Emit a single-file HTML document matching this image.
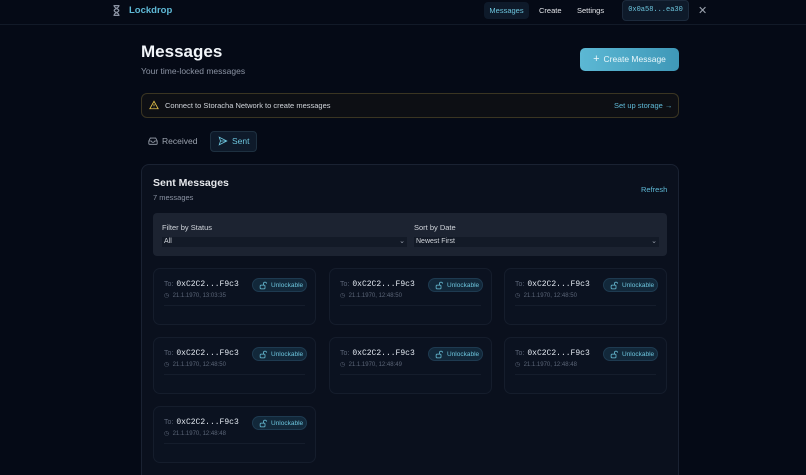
<!DOCTYPE html>
<html><head><meta charset="utf-8"><style>
*{box-sizing:border-box;margin:0;padding:0}
html,body{width:806px;height:475px;overflow:hidden}
body{background:#050a16;font-family:"Liberation Sans",sans-serif;position:relative;color:#e5e7eb}
.a{position:absolute}
.mono{font-family:"Liberation Mono",monospace}
.card{position:absolute;width:163px;height:57px;border:1px solid #151d2c;border-radius:7px;background:#0b1220}
.card .to{position:absolute;left:10px;top:11px;font-size:7px;color:#5b6577}
.card .to b{font-family:"Liberation Mono",monospace;font-weight:normal;font-size:8px;color:#e2e8f0;margin-left:3px}
.card .dt{position:absolute;left:10px;top:23px;font-size:6px;color:#5b6577}
.card .line{position:absolute;left:10px;right:10px;top:36px;border-top:1px solid #151d2c}
.badge{position:absolute;left:98px;top:9px;width:55px;height:14px;border-radius:7px;background:#12283a;border:1px solid #1e3a50;color:#6cc4dc;font-size:6.5px;line-height:12px;padding-left:18px;padding-top:0}
.badge span{position:absolute;top:3px;left:18px;line-height:7px}
.badge svg{position:absolute;left:6px;top:2px}
</style></head><body>
<div class="a" style="left:0;top:24px;width:806px;border-top:1px solid #121a28"></div>
<svg class="a" style="left:113px;top:5px" width="7" height="11" viewBox="0 0 7 11" fill="none" stroke="#8b93a3" stroke-width="1.2"><path d="M0.5 0.6h6M0.5 10.4h6M1.2 0.6c0 3 4.6 3 4.6 4.9S1.2 7.4 1.2 10.4M5.8 0.6c0 3-4.6 3-4.6 4.9s4.6 1.9 4.6 4.9"/></svg>
<div class="a" style="left:129px;top:5px;color:#5fb9d6;font-size:9.5px;font-weight:bold">Lockdrop</div>
<div class="a" style="left:484px;top:2px;width:45px;height:17px;background:#0e1a2a;border-radius:4px;color:#6cc4dc;font-size:7.5px;line-height:17px;text-align:center">Messages</div>
<div class="a" style="left:539px;top:6px;color:#e5e7eb;font-size:7.5px">Create</div>
<div class="a" style="left:577px;top:6px;color:#e5e7eb;font-size:7.5px">Settings</div>
<div class="a mono" style="left:622px;top:0;width:67px;height:21px;background:#0e1a2a;border:1px solid #1c2a3c;border-radius:4px;color:#6cc4dc;font-size:7px;line-height:19px;text-align:center">0x0a58...ea30</div>
<div class="a" style="left:698px;top:4px;color:#9ca3af;font-size:11px">✕</div>

<div class="a" style="left:141px;top:42px;font-size:17px;font-weight:bold;color:#f1f5f9">Messages</div>
<div class="a" style="left:141px;top:66px;font-size:8.5px;color:#8b93a3">Your time-locked messages</div>
<div class="a" style="left:580px;top:48px;width:99px;height:23px;border-radius:5px;background:linear-gradient(90deg,#5cb8d4,#3f98b8);color:#eaf7fb;font-size:8.5px;line-height:23px;text-align:center"><span style="font-size:11px;margin-right:4px">+</span>Create Message</div>

<div class="a" style="left:141px;top:93px;width:538px;height:25px;border:1px solid #3a3522;border-radius:6px;background:#0d0f14"></div>
<svg class="a" style="left:149px;top:100px" width="10" height="10" viewBox="0 0 24 24" fill="none" stroke="#e2c04a" stroke-width="2"><path d="M12 3L2 21h20z M12 10v5 M12 18v.5"/></svg>
<div class="a" style="left:165px;top:101px;font-size:7.5px;color:#d1d5db">Connect to Storacha Network to create messages</div>
<div class="a" style="left:614px;top:101px;font-size:7.5px;color:#5fb9d6">Set up storage →</div>

<svg class="a" style="left:148px;top:136px" width="10" height="10" viewBox="0 0 24 24" fill="none" stroke="#9ca3af" stroke-width="2"><path d="M22 12h-6l-2 3h-4l-2-3H2"/><path d="M5.5 5h13L22 12v6a2 2 0 0 1-2 2H4a2 2 0 0 1-2-2v-6z"/></svg>
<div class="a" style="left:162px;top:136px;font-size:8.5px;color:#9ca3af">Received</div>
<div class="a" style="left:210px;top:131px;width:47px;height:21px;border:1px solid #1e3040;background:#0e1a2a;border-radius:4px"></div>
<svg class="a" style="left:218px;top:136px" width="10" height="10" viewBox="0 0 24 24" fill="none" stroke="#6cc4dc" stroke-width="2"><path d="M3 3l18 9-18 9 3-9z M6 12h15"/></svg>
<div class="a" style="left:232px;top:136px;font-size:8.5px;color:#6cc4dc">Sent</div>

<div class="a" style="left:141px;top:164px;width:538px;height:311px;border:1px solid #1a2232;border-bottom:none;border-radius:8px 8px 0 0;background:#0a101d"></div>
<div class="a" style="left:153px;top:177px;font-size:10.5px;font-weight:bold;color:#e5e7eb">Sent Messages</div>
<div class="a" style="left:153px;top:193px;font-size:7.5px;color:#8b93a3">7 messages</div>
<div class="a" style="left:641px;top:185px;font-size:7.5px;color:#5fb9d6">Refresh</div>

<div class="a" style="left:153px;top:213px;width:514px;height:43px;border-radius:4px;background:#1c2331"></div>
<div class="a" style="left:162px;top:223px;font-size:7.5px;color:#d1d5db">Filter by Status</div>
<div class="a" style="left:162px;top:237px;width:245px;height:10px;background:#131a27;font-size:7px;color:#d1d5db;padding-left:2px;line-height:10px">All<span style="position:absolute;right:2px;color:#9ca3af">⌄</span></div>
<div class="a" style="left:414px;top:223px;font-size:7.5px;color:#d1d5db">Sort by Date</div>
<div class="a" style="left:414px;top:237px;width:245px;height:10px;background:#131a27;font-size:7px;color:#d1d5db;padding-left:2px;line-height:10px">Newest First<span style="position:absolute;right:2px;color:#9ca3af">⌄</span></div>

<div class="card" style="left:153px;top:268px"><div class="to">To:<b>0xC2C2...F9c3</b></div><div class="dt">◷ &nbsp;21.1.1970, 13:03:35</div><div class="line"></div><div class="badge"><svg width="9" height="9" viewBox="0 0 24 24" fill="none" stroke="#6cc4dc" stroke-width="2"><rect x="3" y="11" width="13" height="10" rx="2"/><path d="M12 11V7a4 4 0 0 1 8 0"/></svg><span>Unlockable</span></div></div>
<div class="card" style="left:329px;top:268px"><div class="to">To:<b>0xC2C2...F9c3</b></div><div class="dt">◷ &nbsp;21.1.1970, 12:48:50</div><div class="line"></div><div class="badge"><svg width="9" height="9" viewBox="0 0 24 24" fill="none" stroke="#6cc4dc" stroke-width="2"><rect x="3" y="11" width="13" height="10" rx="2"/><path d="M12 11V7a4 4 0 0 1 8 0"/></svg><span>Unlockable</span></div></div>
<div class="card" style="left:504px;top:268px"><div class="to">To:<b>0xC2C2...F9c3</b></div><div class="dt">◷ &nbsp;21.1.1970, 12:48:50</div><div class="line"></div><div class="badge"><svg width="9" height="9" viewBox="0 0 24 24" fill="none" stroke="#6cc4dc" stroke-width="2"><rect x="3" y="11" width="13" height="10" rx="2"/><path d="M12 11V7a4 4 0 0 1 8 0"/></svg><span>Unlockable</span></div></div>
<div class="card" style="left:153px;top:337px"><div class="to">To:<b>0xC2C2...F9c3</b></div><div class="dt">◷ &nbsp;21.1.1970, 12:48:50</div><div class="line"></div><div class="badge"><svg width="9" height="9" viewBox="0 0 24 24" fill="none" stroke="#6cc4dc" stroke-width="2"><rect x="3" y="11" width="13" height="10" rx="2"/><path d="M12 11V7a4 4 0 0 1 8 0"/></svg><span>Unlockable</span></div></div>
<div class="card" style="left:329px;top:337px"><div class="to">To:<b>0xC2C2...F9c3</b></div><div class="dt">◷ &nbsp;21.1.1970, 12:48:49</div><div class="line"></div><div class="badge"><svg width="9" height="9" viewBox="0 0 24 24" fill="none" stroke="#6cc4dc" stroke-width="2"><rect x="3" y="11" width="13" height="10" rx="2"/><path d="M12 11V7a4 4 0 0 1 8 0"/></svg><span>Unlockable</span></div></div>
<div class="card" style="left:504px;top:337px"><div class="to">To:<b>0xC2C2...F9c3</b></div><div class="dt">◷ &nbsp;21.1.1970, 12:48:48</div><div class="line"></div><div class="badge"><svg width="9" height="9" viewBox="0 0 24 24" fill="none" stroke="#6cc4dc" stroke-width="2"><rect x="3" y="11" width="13" height="10" rx="2"/><path d="M12 11V7a4 4 0 0 1 8 0"/></svg><span>Unlockable</span></div></div>
<div class="card" style="left:153px;top:406px"><div class="to">To:<b>0xC2C2...F9c3</b></div><div class="dt">◷ &nbsp;21.1.1970, 12:48:48</div><div class="line"></div><div class="badge"><svg width="9" height="9" viewBox="0 0 24 24" fill="none" stroke="#6cc4dc" stroke-width="2"><rect x="3" y="11" width="13" height="10" rx="2"/><path d="M12 11V7a4 4 0 0 1 8 0"/></svg><span>Unlockable</span></div></div>
</body></html>
